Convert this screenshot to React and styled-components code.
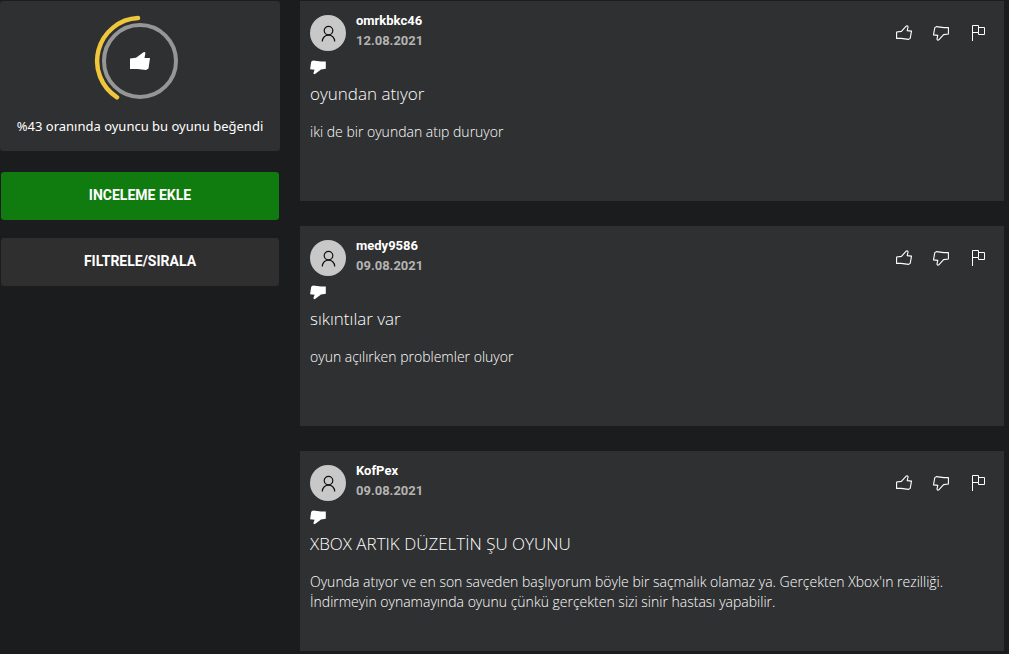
import styled, { createGlobalStyle } from "styled-components";

const GlobalStyle = createGlobalStyle`
  * {
    box-sizing: border-box;
  }

  body {
    margin: 0;
    background: #1b1c1d;
    color: #fff;
    font-family: "Open Sans", "Noto Sans", sans-serif;
  }
`;

const Page = styled.div`
  display: flex;
  align-items: flex-start;
  gap: 20px;
  padding: 1px 5px 3px 0;
`;

const Sidebar = styled.aside`
  flex: 0 0 280px;
`;

const ScoreCard = styled.section`
  display: flex;
  flex-direction: column;
  align-items: center;
  gap: 9px;
  padding: 14px 8px 15px;
  border-radius: 3px;
  background: #2f3031;
`;

const ScoreText = styled.p`
  margin: 0;
  font-family: "Noto Sans", sans-serif;
  font-size: 13px;
  line-height: 20px;
  white-space: nowrap;
`;

const Actions = styled.div`
  display: flex;
  flex-direction: column;
  gap: 18px;
  padding: 21px 1px;
`;

const ActionButton = styled.button`
  height: 48px;
  padding: 0 0 2px;
  border: 0;
  border-radius: 3px;
  background: ${({ $primary }) => ($primary ? "#107c10" : "#2f2f2f")};
  color: #fff;
  font-family: Roboto, sans-serif;
  font-size: 14px;
  font-weight: 700;
  cursor: pointer;
`;

const Reviews = styled.main`
  flex: 1;
  min-width: 0;
  display: flex;
  flex-direction: column;
  gap: 25px;
`;

const Card = styled.article`
  min-height: 200px;
  padding: 10px;
  background: #2f3031;
`;

const CardHeader = styled.header`
  display: flex;
  align-items: center;
  gap: 10px;
  height: 44px;
`;

const Avatar = styled.span`
  display: flex;
  align-items: center;
  justify-content: center;
  width: 36px;
  height: 36px;
  border-radius: 50%;
  background: #c8c8c8;
`;

const Author = styled.div`
  flex: 1;
  height: 44px;
  font-family: Roboto, sans-serif;
  font-size: 13px;
  font-weight: 700;
  line-height: 20px;
`;

const Name = styled.div`
  color: #fff;
`;

const PostDate = styled.time`
  display: block;
  color: #b4b4b4;
`;

const Tools = styled.div`
  display: flex;
  gap: 13px;
  padding-right: 4px;
`;

const IconButton = styled.button`
  display: flex;
  align-items: center;
  justify-content: center;
  width: 24px;
  height: 24px;
  padding: 0;
  border: 0;
  background: none;
  color: #fff;
  cursor: pointer;
`;

const Verdict = styled.div`
  display: flex;
  align-items: flex-start;
  height: 26px;
  padding-top: 4px;
`;

const Title = styled.h3`
  margin: 0;
  font-size: 17px;
  font-weight: 300;
  line-height: 26px;
`;

const Body = styled.p`
  margin: 15px 0 0;
  font-size: 14px;
  font-weight: 300;
  line-height: 20px;
  white-space: pre-line;
`;

const THUMB = "M.6 7 5.4 6.4 10.2 1.2C11 .5 12.2 1 12 2.2L11.2 5.6 15.5 6.1 14.2 13.4 12.6 14.4 5 13.4H.6Z";
const THUMB_SOLID = "M.2 6.2 5 5.6 11 .9C12 .6 12.8 1.2 12.4 2.4L11.4 5.2 15.9 5.8 14.8 13.2 13 14.4 5 13.6H.2Z";

function ThumbIcon({ down, filled }) {
  return (
    <svg width="16" height="16" viewBox="0 0 16 16" aria-hidden="true">
      <path
        d={filled ? THUMB_SOLID : THUMB}
        transform={down ? "rotate(180 8 8)" : undefined}
        fill={filled ? "#fff" : "none"}
        stroke={filled ? "none" : "#fff"}
        strokeWidth="1.1"
        strokeLinejoin="round"
      />
    </svg>
  );
}

function FlagIcon() {
  return (
    <svg width="16" height="18" viewBox="0 0 16 18" aria-hidden="true">
      <path d="M2.5 17V1.5H8.5V8.5H2.5M8.5 3.5H14.5V10.5H8.5V8.5" fill="none" stroke="#fff" />
    </svg>
  );
}

function PersonIcon() {
  return (
    <svg width="16" height="18" viewBox="0 0 16 18" aria-hidden="true">
      <g fill="none" stroke="#111" strokeWidth="1.2">
        <circle cx="8.5" cy="6.6" r="4.3" />
        <path d="M2.3 17.6C2.3 8.9 14.7 8.9 14.7 17.6" />
      </g>
    </svg>
  );
}

function Gauge() {
  return (
    <svg width="92" height="92" viewBox="0 0 92 92" role="img" aria-label="%43">
      <circle cx="46" cy="46" r="36" fill="none" stroke="#969696" strokeWidth="4" />
      <path
        d="M44 3.1A43 43 0 0 0 23 82.3"
        fill="none"
        stroke="#efc63c"
        strokeWidth="4.5"
        strokeLinecap="round"
      />
      <path d="M36 43.5 42 42.7 49.5 37.3C51 36.6 51.6 37.6 51.3 38.8L50.5 43H56L54.5 53.5 52 55 43.5 54H36Z" fill="#fff" />
    </svg>
  );
}

const reviews = [
  {
    name: "omrkbkc46",
    date: "12.08.2021",
    title: "oyundan atıyor",
    text: "iki de bir oyundan atıp duruyor",
  },
  {
    name: "medy9586",
    date: "09.08.2021",
    title: "sıkıntılar var",
    text: "oyun açılırken problemler oluyor",
  },
  {
    name: "KofPex",
    date: "09.08.2021",
    title: "XBOX ARTIK DÜZELTİN ŞU OYUNU",
    text: "Oyunda atıyor ve en son saveden başlıyorum böyle bir saçmalık olamaz ya. Gerçekten Xbox'ın rezilliği.\nİndirmeyin oynamayında oyunu çünkü gerçekten sizi sinir hastası yapabilir.",
  },
];

function Review({ name, date, title, text }) {
  return (
    <Card>
      <CardHeader>
        <Avatar>
          <PersonIcon />
        </Avatar>
        <Author>
          <Name>{name}</Name>
          <PostDate>{date}</PostDate>
        </Author>
        <Tools>
          <IconButton aria-label="Beğen">
            <ThumbIcon />
          </IconButton>
          <IconButton aria-label="Beğenme">
            <ThumbIcon down />
          </IconButton>
          <IconButton aria-label="Bildir">
            <FlagIcon />
          </IconButton>
        </Tools>
      </CardHeader>
      <Verdict>
        <ThumbIcon down filled />
      </Verdict>
      <Title>{title}</Title>
      <Body>{text}</Body>
    </Card>
  );
}

export default function App() {
  return (
    <>
      <GlobalStyle />
      <Page>
        <Sidebar>
          <ScoreCard>
            <Gauge />
            <ScoreText>%43 oranında oyuncu bu oyunu beğendi</ScoreText>
          </ScoreCard>
          <Actions>
            <ActionButton $primary>INCELEME EKLE</ActionButton>
            <ActionButton>FILTRELE/SIRALA</ActionButton>
          </Actions>
        </Sidebar>
        <Reviews>
          {reviews.map((review) => (
            <Review key={review.name} {...review} />
          ))}
        </Reviews>
      </Page>
    </>
  );
}
